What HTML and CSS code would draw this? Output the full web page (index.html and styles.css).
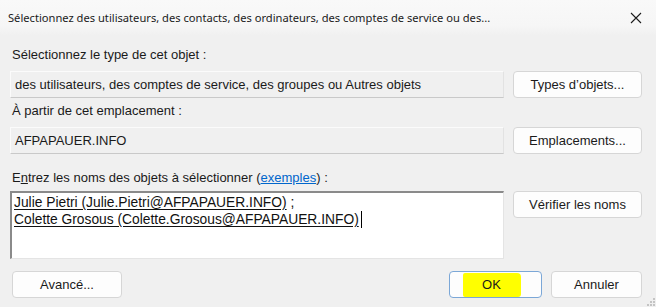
FILE: index.html
```html
<!DOCTYPE html>
<html lang="fr">
<head>
  <meta charset="UTF-8">
  <title>Sélectionner des objets</title>
  <link rel="stylesheet" href="styles.css">
</head>
<body>

  <div class="dialog">
    <!-- Title bar -->
    <div class="titlebar">
      <span class="title">Sélectionnez des utilisateurs, des contacts, des ordinateurs, des comptes de service ou des...</span>
      <svg class="close" width="12" height="12" viewBox="0 0 12 12">
        <path d="M1 1 L11 11 M11 1 L1 11" stroke="#1b1b1b" stroke-width="1.1" fill="none"/>
      </svg>
    </div>

    <div class="content">
      <div class="label first">Sélectionnez le type de cet objet :</div>
      <div class="row">
        <div class="field">des utilisateurs, des comptes de service, des groupes ou Autres objets</div>
        <button class="btn">Types d’objets...</button>
      </div>

      <div class="label">À partir de cet emplacement :</div>
      <div class="row">
        <div class="field">AFPAPAUER.INFO</div>
        <button class="btn">Emplacements...</button>
      </div>

      <div class="label third">E<u>n</u>trez les noms des objets à sélectionner (<a href="#" class="link">exemples</a>) :</div>
      <div class="row top">
        <div class="names">
          <div><u>Julie Pietri (Julie.Pietri@AFPAPAUER.INFO)</u> ;</div>
          <div><u>Colette Grosous (Colette.Grosous@AFPAPAUER.INFO)</u><span class="caret"></span></div>
        </div>
        <button class="btn">Vérifier les noms</button>
      </div>

      <div class="footer">
        <button class="btn small">Avancé...</button>
        <div class="actions">
          <button class="btn ok"><span class="mark">OK</span></button>
          <button class="btn cancel">Annuler</button>
        </div>
      </div>
    </div>

    <svg class="grip" width="12" height="12" viewBox="0 0 12 12">
      <rect x="9" y="3" width="2" height="2" fill="#c4c4c4"/>
      <rect x="6" y="6" width="2" height="2" fill="#c4c4c4"/>
      <rect x="9" y="6" width="2" height="2" fill="#c4c4c4"/>
      <rect x="3" y="9" width="2" height="2" fill="#c4c4c4"/>
      <rect x="6" y="9" width="2" height="2" fill="#c4c4c4"/>
      <rect x="9" y="9" width="2" height="2" fill="#c4c4c4"/>
    </svg>
  </div>

</body>
</html>
```

FILE: styles.css
```css
* {
  box-sizing: border-box;
}

body {
  margin: 0;
  padding: 0;
  background: #f0f0f0;
  font-family: 'Liberation Sans', Arial, sans-serif;
  font-size: 13px;
  color: #1a1a1a;
}

.dialog {
  position: relative;
  width: 656px;
  height: 307px;
  overflow: hidden;
}

/* Title bar */
.titlebar {
  height: 36px;
  display: flex;
  align-items: center;
  justify-content: space-between;
  padding: 0 14px 0 8px;
  background: linear-gradient(#f9f9f9, #f6f6f6 70%, #f0f0f0);
}

.title {
  font-family: 'Noto Sans', 'Open Sans', sans-serif;
  font-size: 11.15px;
  color: #1b1b1b;
  padding-bottom: 2px;
}

/* Content */
.content {
  padding: 0 14px 0 10px;
}

.label {
  height: 16px;
  line-height: 16px;
  padding-left: 2px;
  margin: 5px 0 8px;
}

.label.first {
  margin-top: 11px;
}

.label.third {
  margin-top: 16px;
  margin-bottom: 5px;
}

.link {
  color: #0066cc;
}

.row {
  display: flex;
  justify-content: space-between;
  align-items: center;
}

.row.top {
  align-items: flex-start;
}

.field {
  width: 494px;
  height: 27px;
  line-height: 25px;
  padding-left: 4px;
  background: #f0f0f0;
  border: 1px solid #fbfbfb;
  border-bottom-color: #c9c9c9;
  border-right-color: #e2e2e2;
  white-space: nowrap;
  overflow: hidden;
}

.names {
  width: 494px;
  height: 68px;
  padding: 1px 2px;
  font-size: 13.8px;
  line-height: 17px;
  background: #fff;
  border-top: 2px solid #8a8a8a;
  border-left: 2px solid #8a8a8a;
  border-right: 1px solid #e4e4e4;
  border-bottom: 1px solid #e4e4e4;
  color: #111;
}

.names u {
  text-underline-offset: 2px;
}

.caret {
  display: inline-block;
  width: 1px;
  height: 17px;
  margin-left: 2px;
  vertical-align: -4px;
  background: #000;
}

.btn {
  width: 129px;
  height: 27px;
  padding: 0;
  background: #fdfdfd;
  border: 1px solid #d6d6d6;
  border-radius: 4px;
  font-family: inherit;
  font-size: 13px;
  color: #1a1a1a;
}

.footer {
  display: flex;
  justify-content: space-between;
  margin-top: 12px;
  padding-left: 2px;
}

.btn.small {
  width: 110px;
}

.actions {
  display: flex;
  gap: 9px;
}

.btn.ok {
  width: 93px;
  border-color: #7ba7d7;
}

.btn.cancel {
  width: 91px;
}

.mark {
  display: inline-block;
  width: 58px;
  height: 24px;
  line-height: 24px;
  margin-left: -8px;
  background: #ffff00;
  border-radius: 2px 4px 3px 2px;
}

.grip {
  position: absolute;
  right: 0;
  bottom: 0;
}
```
